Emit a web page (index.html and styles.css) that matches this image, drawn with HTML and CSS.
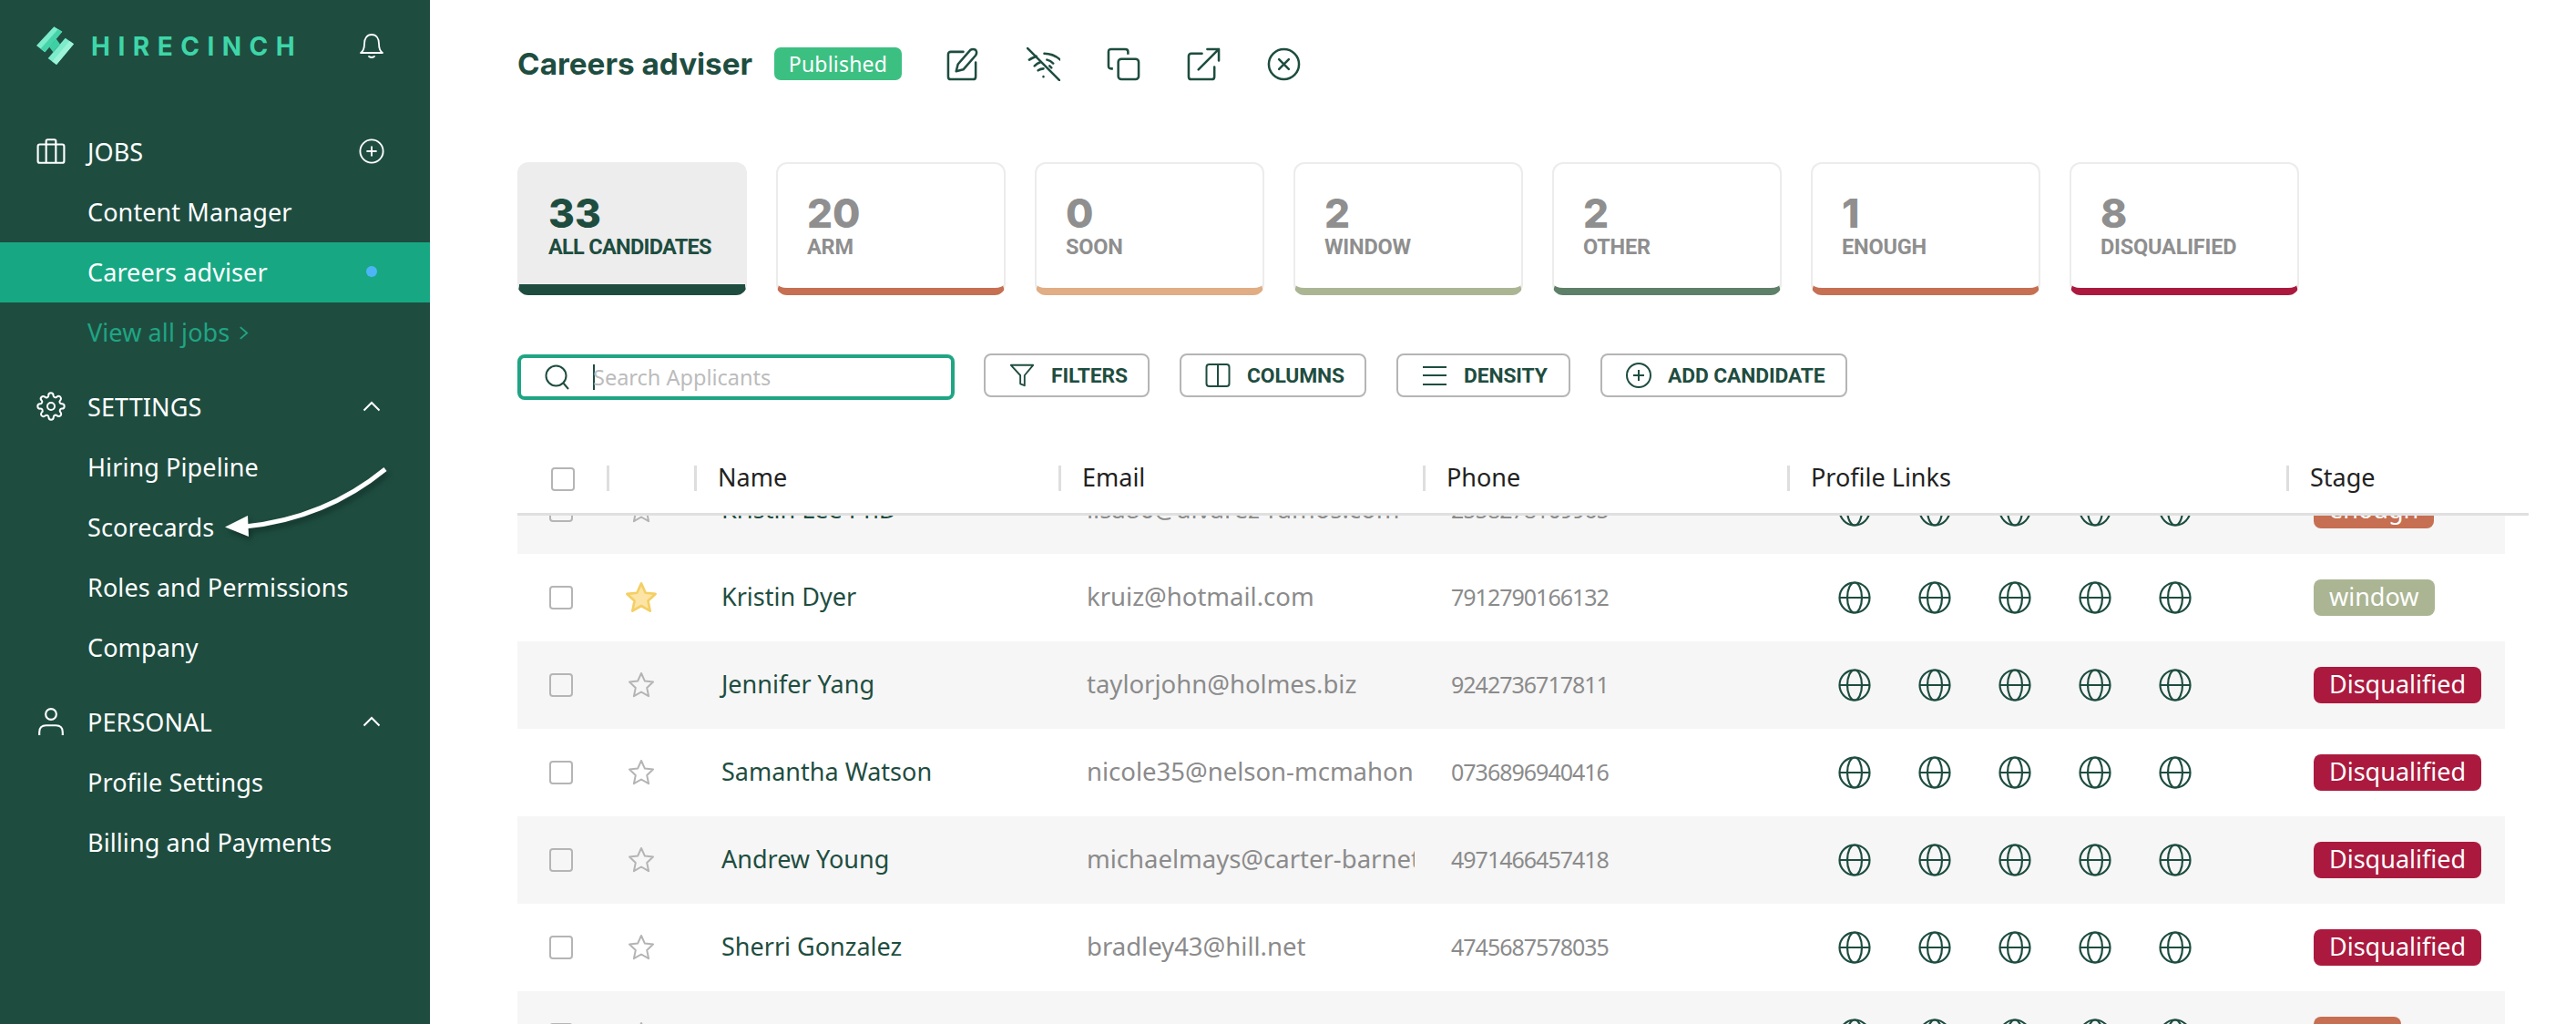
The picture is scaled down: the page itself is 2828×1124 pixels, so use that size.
FILE: index.html
```html
<!DOCTYPE html>
<html lang="en">
<head>
<meta charset="utf-8">
<title>HireCinch</title>
<link rel="stylesheet" href="styles.css">
</head>
<body>
<svg class="defs" width="0" height="0" aria-hidden="true">
  <symbol id="globe" viewBox="0 0 36 36"><g fill="none" stroke="#1e4d40" stroke-width="2.2"><circle cx="18" cy="18" r="16.5"/><ellipse cx="18" cy="18" rx="8" ry="16.5"/><path d="M1.5 18h33"/></g></symbol>
  <symbol id="star" viewBox="0 0 30 30"><path d="M15 2l3.900 8.600 9.100 1-6.800 6.300 1.900 9.300-8.100-4.700-8.100 4.700 1.900-9.300L2 11.600l9.100-1z" fill="none" stroke="#b4b4b4" stroke-width="2" stroke-linejoin="round"/></symbol>
</svg>
<div class="app">
  <aside class="sidebar">
    <div class="brand">
      <div class="brand-left">
        <svg class="logo" viewBox="0 0 42 43"><path d="M19.300.3 28.300 5.700 9.300 28.300 0 21z" fill="#7cecca"/><path d="M23.800 3 28.300 5.700 9.300 28.300 4.600 24.600z" fill="#46d3aa"/><path d="M31.700 12.700 41 19.300 22 42 12.700 35z" fill="#7cecca"/><path d="M36.400 16 41 19.300 22 42 17.400 38.500z" fill="#9cf3d8"/><path d="M21.600 13.600 26 19.400 18.400 28.300 14 22.600z" fill="#3fcfa5"/></svg>
        <span class="wordmark">HIRECINCH</span>
      </div>
      <svg class="side-ico" viewBox="0 0 28 30" fill="none" stroke="#fff" stroke-width="1.800" stroke-linejoin="round" stroke-linecap="round"><path d="M2 23c3-2 4-5 4-10 0-6 3-10 8-10s8 4 8 10c0 5 1 8 4 10z"/><path d="M11 27q3 2 6 0"/></svg>
    </div>
    <nav class="nav">
      <div class="nav-row head">
        <svg class="lead-ico" viewBox="0 0 30 28" fill="none" stroke="#fff" stroke-width="2" stroke-linejoin="round"><rect x="1.500" y="7" width="27" height="19" rx="2"/><path d="M10 26V3.500Q10 2 11.500 2h7Q20 2 20 3.500V26"/></svg>
        <span class="grow">JOBS</span>
        <svg class="side-ico" viewBox="0 0 30 30" fill="none" stroke="#fff" stroke-width="2"><circle cx="15" cy="15" r="13.500"/><path d="M15 9v12M9 15h12"/></svg>
      </div>
      <a class="nav-row">Content Manager</a>
      <a class="nav-row active"><span class="grow">Careers adviser</span><span class="dot-wrap"><i class="dot"></i></span></a>
      <a class="nav-row link">View all jobs <svg class="more" viewBox="0 0 12 18" fill="none" stroke="#1fa584" stroke-width="2"><path d="M2 2l8 7-8 7"/></svg></a>

      <div class="nav-row head section">
        <svg class="lead-ico" viewBox="0 0 24 24" fill="none" stroke="#fff" stroke-width="1.500" stroke-linejoin="round"><circle cx="12" cy="12" r="3"/><path d="M19.400 15a1.650 1.650 0 0 0 .33 1.820l.06.06a2 2 0 1 1-2.830 2.830l-.06-.06a1.650 1.650 0 0 0-2.820 1.170V21a2 2 0 1 1-4 0v-.09a1.650 1.650 0 0 0-2.820-1.170l-.06.06a2 2 0 1 1-2.830-2.830l.06-.06A1.650 1.650 0 0 0 3.090 14H3a2 2 0 1 1 0-4h.09a1.650 1.650 0 0 0 1.170-2.820l-.06-.06a2 2 0 1 1 2.830-2.830l.06.06A1.650 1.650 0 0 0 9.910 3.170V3a2 2 0 1 1 4 0v.09a1.650 1.650 0 0 0 2.820 1.170l.06-.06a2 2 0 1 1 2.830 2.830l-.06.06a1.650 1.650 0 0 0 1.170 2.820H21a2 2 0 1 1 0 4h-.09a1.650 1.650 0 0 0-1.510 1z"/></svg>
        <span class="grow">SETTINGS</span>
        <svg class="side-ico chev" viewBox="0 0 20 12" fill="none" stroke="#fff" stroke-width="2"><path d="M1.500 10.500 10 2l8.500 8.500"/></svg>
      </div>
      <a class="nav-row">Hiring Pipeline</a>
      <a class="nav-row">Scorecards</a>
      <a class="nav-row">Roles and Permissions</a>
      <a class="nav-row">Company</a>

      <div class="nav-row head section">
        <svg class="lead-ico" viewBox="0 0 30 30" fill="none" stroke="#fff" stroke-width="2"><circle cx="15" cy="7.500" r="5.500"/><path d="M3 29v-3q0-7 7-7h10q7 0 7 7v3"/></svg>
        <span class="grow">PERSONAL</span>
        <svg class="side-ico chev" viewBox="0 0 20 12" fill="none" stroke="#fff" stroke-width="2"><path d="M1.500 10.500 10 2l8.500 8.500"/></svg>
      </div>
      <a class="nav-row">Profile Settings</a>
      <a class="nav-row">Billing and Payments</a>
    </nav>
    <svg class="arrow" viewBox="0 0 190 84" fill="none"><path d="M176 6C132 42 82 63 22 69" stroke="#fff" stroke-width="5"/><path d="M0 69.500 25 57 26 80z" fill="#fff"/></svg>
  </aside>

  <main class="main">
    <header class="title-row">
      <h1 class="title">Careers adviser</h1>
      <span class="badge">Published</span>
      <div class="title-icons">
        <svg class="t-ico" viewBox="0 0 38 38" fill="none" stroke="#1e4d40" stroke-width="2.600" stroke-linecap="round" stroke-linejoin="round"><path d="M19 5H5Q2 5 2 8v25q0 3 3 3h25q3 0 3-3V17"/><path d="M11 27l2-8L27 3q3-2 6 0 2 3 0 6L19 25z"/></svg>
        <svg class="t-ico" viewBox="0 0 38 38" fill="none" stroke="#1e4d40" stroke-width="2.600" stroke-linecap="round"><path d="M1 1l37 37"/><path d="M20 7q10 0 18 7M3 14q3-2 8-4M9 21q3-3 6-4M23 14q4 1 7 4M13 26q3-2 6-2M26 21l2 2M19 33v.1"/></svg>
        <svg class="t-ico" viewBox="0 0 38 38" fill="none" stroke="#1e4d40" stroke-width="2.600" stroke-linejoin="round"><rect x="13" y="13" width="23" height="23" rx="3.500"/><path d="M7 24H5q-3 0-3-3V5q0-3 3-3h16q3 0 3 3v3"/></svg>
        <svg class="t-ico" viewBox="0 0 38 38" fill="none" stroke="#1e4d40" stroke-width="2.600" stroke-linecap="round" stroke-linejoin="round"><path d="M17 7H5Q2 7 2 10v23q0 3 3 3h23q3 0 3-3V22"/><path d="M13 25 36 2M23 2h13v13"/></svg>
        <svg class="t-ico" viewBox="0 0 38 38" fill="none" stroke="#1e4d40" stroke-width="2.600" stroke-linecap="round"><circle cx="19" cy="19" r="17"/><path d="M13.500 13.500l11 11M24.500 13.500l-11 11"/></svg>
      </div>
    </header>

    <section class="stats">
      <div class="stat on"><b>33</b><span>ALL CANDIDATES</span></div>
      <div class="stat c-arm"><b>20</b><span>ARM</span></div>
      <div class="stat c-soon"><b>0</b><span>SOON</span></div>
      <div class="stat c-window"><b>2</b><span>WINDOW</span></div>
      <div class="stat c-other"><b>2</b><span>OTHER</span></div>
      <div class="stat c-arm"><b>1</b><span>ENOUGH</span></div>
      <div class="stat c-dis"><b>8</b><span>DISQUALIFIED</span></div>
    </section>

    <section class="toolbar">
      <label class="search">
        <svg class="search-ico" viewBox="0 0 28 28" fill="none" stroke="#1e4d40" stroke-width="2"><circle cx="12.500" cy="12.500" r="11"/><path d="M20 20l6 7"/></svg>
        <i class="caret"></i><span class="ph">Search Applicants</span>
      </label>
      <button class="btn b-filters"><svg viewBox="0 0 30 30" fill="none" stroke="#1e4d40" stroke-width="2" stroke-linejoin="round"><path d="M2 3h26L18 15v12l-5-2V15z"/></svg>FILTERS</button>
      <button class="btn b-columns"><svg viewBox="0 0 28 28" fill="none" stroke="#1e4d40" stroke-width="2"><rect x="1.500" y="2" width="25" height="24" rx="3"/><path d="M14 2v24"/></svg>COLUMNS</button>
      <button class="btn b-density"><svg viewBox="0 0 28 28" fill="none" stroke="#1e4d40" stroke-width="2"><path d="M1 5h26M1 14h26M1 24h26"/></svg>DENSITY</button>
      <button class="btn b-add"><svg viewBox="0 0 28 28" fill="none" stroke="#1e4d40" stroke-width="2"><circle cx="14" cy="14" r="13"/><path d="M14 8v12M8 14h12"/></svg>ADD CANDIDATE</button>
    </section>

    <section class="table">
      <div class="thead">
        <div class="th th-check"><i class="box"></i></div>
        <div class="th"></div>
        <div class="th">Name</div>
        <div class="th">Email</div>
        <div class="th">Phone</div>
        <div class="th">Profile Links</div>
        <div class="th">Stage</div>
      </div>
      <div class="tbody">
        <div class="tr"><div class="td-check"><i class="box"></i></div><div class="td-star"><svg class="star"><use href="#star"/></svg></div><div class="name">Kristin Lee PhD</div><div class="cell">lisa86@alvarez-ramos.com</div><div class="phone">2558278109965</div><div class="links"><svg><use href="#globe"/></svg><svg><use href="#globe"/></svg><svg><use href="#globe"/></svg><svg><use href="#globe"/></svg><svg><use href="#globe"/></svg></div><div class="stage"><span class="pill p-arm">enough</span></div></div>
        <div class="tr"><div class="td-check"><i class="box"></i></div><div class="td-star"><svg class="star gold" viewBox="0 0 30 30"><path d="M15 2l3.900 8.600 9.100 1-6.800 6.300 1.900 9.300-8.100-4.700-8.100 4.700 1.900-9.300L2 11.600l9.100-1z" fill="#fbe4a6" stroke="#f4cf63" stroke-width="2.200" stroke-linejoin="round"/></svg></div><div class="name">Kristin Dyer</div><div class="cell">kruiz@hotmail.com</div><div class="phone">7912790166132</div><div class="links"><svg><use href="#globe"/></svg><svg><use href="#globe"/></svg><svg><use href="#globe"/></svg><svg><use href="#globe"/></svg><svg><use href="#globe"/></svg></div><div class="stage"><span class="pill p-window">window</span></div></div>
        <div class="tr"><div class="td-check"><i class="box"></i></div><div class="td-star"><svg class="star"><use href="#star"/></svg></div><div class="name">Jennifer Yang</div><div class="cell">taylorjohn@holmes.biz</div><div class="phone">9242736717811</div><div class="links"><svg><use href="#globe"/></svg><svg><use href="#globe"/></svg><svg><use href="#globe"/></svg><svg><use href="#globe"/></svg><svg><use href="#globe"/></svg></div><div class="stage"><span class="pill p-dis">Disqualified</span></div></div>
        <div class="tr"><div class="td-check"><i class="box"></i></div><div class="td-star"><svg class="star"><use href="#star"/></svg></div><div class="name">Samantha Watson</div><div class="cell">nicole35@nelson-mcmahon.com</div><div class="phone">0736896940416</div><div class="links"><svg><use href="#globe"/></svg><svg><use href="#globe"/></svg><svg><use href="#globe"/></svg><svg><use href="#globe"/></svg><svg><use href="#globe"/></svg></div><div class="stage"><span class="pill p-dis">Disqualified</span></div></div>
        <div class="tr"><div class="td-check"><i class="box"></i></div><div class="td-star"><svg class="star"><use href="#star"/></svg></div><div class="name">Andrew Young</div><div class="cell">michaelmays@carter-barnett.com</div><div class="phone">4971466457418</div><div class="links"><svg><use href="#globe"/></svg><svg><use href="#globe"/></svg><svg><use href="#globe"/></svg><svg><use href="#globe"/></svg><svg><use href="#globe"/></svg></div><div class="stage"><span class="pill p-dis">Disqualified</span></div></div>
        <div class="tr"><div class="td-check"><i class="box"></i></div><div class="td-star"><svg class="star"><use href="#star"/></svg></div><div class="name">Sherri Gonzalez</div><div class="cell">bradley43@hill.net</div><div class="phone">4745687578035</div><div class="links"><svg><use href="#globe"/></svg><svg><use href="#globe"/></svg><svg><use href="#globe"/></svg><svg><use href="#globe"/></svg><svg><use href="#globe"/></svg></div><div class="stage"><span class="pill p-dis">Disqualified</span></div></div>
        <div class="tr"><div class="td-check"><i class="box"></i></div><div class="td-star"><svg class="star"><use href="#star"/></svg></div><div class="name"></div><div class="cell"></div><div class="phone"></div><div class="links"><svg><use href="#globe"/></svg><svg><use href="#globe"/></svg><svg><use href="#globe"/></svg><svg><use href="#globe"/></svg><svg><use href="#globe"/></svg></div><div class="stage"><span class="pill p-arm p-last">arm</span></div></div>
      </div>
    </section>
  </main>
</div>
</body>
</html>
```
FILE: styles.css
```css
* { box-sizing: border-box; }
html, body { margin: 0; height: 100%; overflow: hidden; background: #fff; }
body { font-family: "Noto Sans", "Open Sans", sans-serif; font-size: 28px; color: #1e4d40; }
.defs { position: absolute; }
.app { display: flex; height: 1124px; }

/* Sidebar */
.sidebar { position: relative; flex: 0 0 472px; background: #1e4d40; color: #fff; }
.brand { height: 100px; display: flex; align-items: center; justify-content: space-between; padding: 0 50px 0 40px; }
.brand-left { display: flex; align-items: center; gap: 18px; }
.logo { width: 42px; height: 43px; }
.wordmark { font-family: Inter, sans-serif; font-weight: 700; font-size: 28px; letter-spacing: 8.500px; color: #3ed6a8; padding-top: 2px; }
.side-ico { width: 28px; height: 30px; }
.chev { width: 20px; height: 12px; margin-right: 4px; }
.nav { margin-top: 34px; }
.nav-row { display: flex; align-items: center; height: 66px; padding: 0 50px 2px 96px; font-size: 27px; letter-spacing: .1px; }
.nav-row.head { padding-left: 40px; }
.section { margin-top: 16px; }
.lead-ico { width: 32px; height: 32px; margin-right: 24px; }
.grow { flex: 1; }
.active { background: #17a883; }
.dot-wrap { width: 28px; display: flex; justify-content: center; }
.dot { width: 12px; height: 12px; border-radius: 50%; background: #4db5f5; }
.link { color: #1fa584; }
.more { width: 11px; height: 17px; margin-left: 10px; margin-top: 3px; }
.arrow { position: absolute; left: 247px; top: 509px; width: 190px; height: 84px; filter: drop-shadow(3px 4px 3px rgba(0,0,0,.35)); }

/* Main */
.main { flex: 1; min-width: 0; padding-left: 96px; }
.title-row { height: 140px; display: flex; align-items: center; }
.title { margin: 0; font-family: Inter, sans-serif; font-weight: 700; font-size: 33.300px; color: #1e4d40; width: 282px; white-space: nowrap; }
.badge { width: 140px; height: 36px; display: flex; align-items: center; justify-content: center; background: #3cc082; color: #fff; font-size: 23px; border-radius: 7px; letter-spacing: .2px; }
.title-icons { display: flex; gap: 51px; margin-left: 49px; }
.t-ico { width: 37px; height: 37px; }

.stats { margin-top: 38px; display: flex; gap: 32px; }
.stat { position: relative; width: 252px; height: 146px; padding: 30px 0 0 32px; border: 2px solid #ececec; border-bottom: 8px solid; border-radius: 12px; color: #8f8f8f; display: flex; flex-direction: column; }
.stat b { font-family: Inter, sans-serif; font-size: 44px; line-height: 48px; font-weight: 800; }
.stat span { font-family: Roboto, sans-serif; font-weight: 700; font-size: 23.500px; line-height: 28px; letter-spacing: -.2px; margin-top: -1px; white-space: nowrap; }
.stat.on { background: #ededed; border-color: #ededed; border-bottom: 12px solid #1e4d40; color: #1e4d40; }
.stat.on span { letter-spacing: -.7px; }
.c-arm { border-bottom-color: #c66f52; }
.c-soon { border-bottom-color: #e0ad84; }
.c-window { border-bottom-color: #abb593; }
.c-other { border-bottom-color: #5e8068; }
.c-dis { border-bottom-color: #ab1a3e; }

.toolbar { margin-top: 64px; height: 50px; display: flex; align-items: flex-start; }
.search { display: flex; align-items: center; width: 480px; height: 50px; margin-top: 1px; border: 4px solid #1fa584; border-radius: 8px; padding-left: 26px; }
.search-ico { width: 28px; height: 28px; }
.caret { width: 2px; height: 28px; background: #1e4d40; margin-left: 25px; }
.ph { font-size: 23.500px; color: #bcbcbc; margin-left: -2px; }
.btn { display: flex; align-items: center; height: 48px; margin-left: 32px; padding: 0 0 0 26px; background: #fff; border: 2px solid #b5b5b5; border-radius: 8px; font-family: Roboto, sans-serif; font-weight: 700; font-size: 22.800px; color: #1e4d40; letter-spacing: -.1px; }
.btn svg { width: 28px; height: 28px; margin-right: 18px; flex: none; }
.b-filters { width: 182px; margin-left: 32px; }
.b-columns { width: 205px; margin-left: 33px; }
.b-density { width: 191px; margin-left: 33px; }
.b-add { width: 271px; margin-left: 33px; }

.table { margin-top: 73px; }
.thead { display: grid; grid-template-columns: 98px 96px 400px 400px 400px 548px 266px; width: 2208px; height: 55px; border-bottom: 3px solid #e0e0e0; position: relative; z-index: 1; background: #fff; }
.th { height: 28px; border-left: 3px solid #dedede; padding-left: 23px; color: #222; line-height: 25px; font-size: 27px; }
.th-check { border-left: 0; padding: 2px 0 0 37px; }
.box { display: block; width: 26px; height: 26px; border: 2px solid #b5b5b5; border-radius: 4px; background: transparent; }
.tbody { height: 558px; overflow: hidden; }
.tr { display: grid; grid-template-columns: 104px 92px 400px 400px 400px 548px 238px; width: 2182px; height: 96px; align-items: center; }
.tr:first-child { margin-top: -54px; }
.tr:nth-child(odd) { background: #f6f6f6; }
.td-check { padding-left: 35px; display: flex; }
.td-star { display: flex; justify-content: flex-start; padding-left: 17px; }
.star { width: 30px; height: 30px; }
.star.gold { width: 36px; height: 36px; margin-left: -3px; }
.name { padding: 0 0 3px 28px; font-size: 27px; color: #1e4d40; white-space: nowrap; overflow: hidden; }
.cell { margin-right: 11px; padding: 0 0 3px 29px; font-size: 27.500px; color: #8b8b8b; white-space: nowrap; overflow: hidden; }
.phone { padding: 0 0 3px 29px; font-size: 25px; letter-spacing: -1px; color: #8b8b8b; white-space: nowrap; }
.links { display: flex; gap: 52px; padding-left: 54px; }
.links svg { width: 36px; height: 36px; flex: none; }
.stage { padding-left: 28px; display: flex; }
.pill { display: inline-flex; align-items: center; height: 40px; padding: 0 17px 3px; border-radius: 8px; color: #fff; font-size: 27px; line-height: 1; }
.p-last { padding: 0 22px 3px; }
.p-arm { background: #c66f52; }
.p-window { background: #abb593; }
.p-dis { background: #ab1a3e; }
```
